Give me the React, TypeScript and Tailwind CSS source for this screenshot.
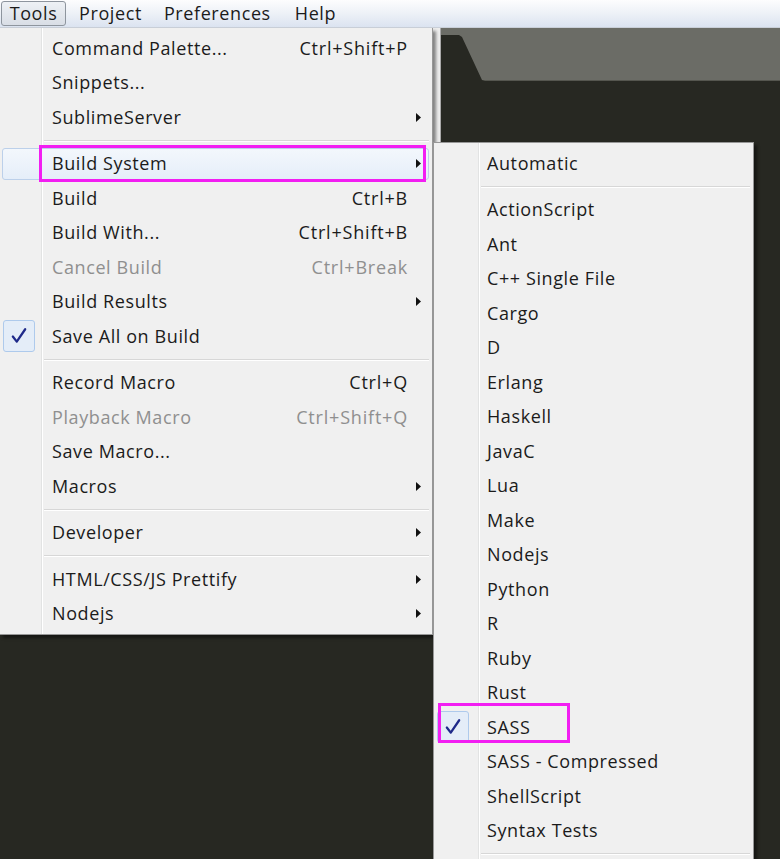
import React from "react";

type Item =
  | { sep: true }
  | {
      sep?: false;
      label: string;
      shortcut?: string;
      arrow?: boolean;
      disabled?: boolean;
      checked?: boolean;
      hover?: boolean;
    };

const toolsItems: Item[] = [
  { label: "Command Palette...", shortcut: "Ctrl+Shift+P" },
  { label: "Snippets..." },
  { label: "SublimeServer", arrow: true },
  { sep: true },
  { label: "Build System", arrow: true, hover: true },
  { label: "Build", shortcut: "Ctrl+B" },
  { label: "Build With...", shortcut: "Ctrl+Shift+B" },
  { label: "Cancel Build", shortcut: "Ctrl+Break", disabled: true },
  { label: "Build Results", arrow: true },
  { label: "Save All on Build", checked: true },
  { sep: true },
  { label: "Record Macro", shortcut: "Ctrl+Q" },
  { label: "Playback Macro", shortcut: "Ctrl+Shift+Q", disabled: true },
  { label: "Save Macro..." },
  { label: "Macros", arrow: true },
  { sep: true },
  { label: "Developer", arrow: true },
  { sep: true },
  { label: "HTML/CSS/JS Prettify", arrow: true },
  { label: "Nodejs", arrow: true },
];

const buildItems: Item[] = [
  { label: "Automatic" },
  { sep: true },
  ...[
    "ActionScript",
    "Ant",
    "C++ Single File",
    "Cargo",
    "D",
    "Erlang",
    "Haskell",
    "JavaC",
    "Lua",
    "Make",
    "Nodejs",
    "Python",
    "R",
    "Ruby",
    "Rust",
  ].map((label) => ({ label })),
  { label: "SASS", checked: true },
  { label: "SASS - Compressed" },
  { label: "ShellScript" },
  { label: "Syntax Tests" },
  { sep: true },
];

function Check() {
  return (
    <svg width="18" height="18" viewBox="0 0 16 16">
      <path
        d="M2.5 8.5 L6 13 L13.5 2"
        fill="none"
        stroke="#1f2a8a"
        strokeWidth="2"
        strokeLinecap="round"
        strokeLinejoin="round"
      />
    </svg>
  );
}

function Arrow() {
  return (
    <svg width="5" height="9" viewBox="0 0 5 9">
      <path d="M0 0 L5 4.5 L0 9 Z" fill="#111" />
    </svg>
  );
}

function MenuRow({ item, gutter, pad }: { item: Item; gutter: number; pad: number }) {
  if (item.sep) {
    return (
      <div className="h-[12px] flex items-center" style={{ paddingLeft: gutter + 2 }}>
        <div className="w-full mr-[3px] border-t border-[#d7d7d7] border-b border-b-white" />
      </div>
    );
  }
  const color = item.disabled ? "text-[#8f8f8f]" : "text-[#1b1b1b]";
  return (
    <div className="relative h-[34.5px] flex items-center">
      {item.hover && (
        <div className="absolute left-[2px] right-[3px] top-[1px] bottom-[1px] rounded-[3px] border border-[#bcd0ea] bg-gradient-to-b from-[#f3f7fc] to-[#e5eef9]" />
      )}
      {item.checked && (
        <div className="absolute left-[3px] top-[1px] w-[32px] h-[32px] rounded-[3px] border border-[#aecaec] bg-[#e4edf8] flex items-center justify-center">
          <Check />
        </div>
      )}
      <div
        className={`relative flex-1 whitespace-nowrap tracking-[0.6px] ${color}`}
        style={{ paddingLeft: gutter + pad }}
      >
        {item.label}
      </div>
      {item.shortcut && (
        <div className={`relative whitespace-nowrap tracking-[0.8px] ${color}`}>
          {item.shortcut}
        </div>
      )}
      <div className="relative w-[24px] h-full flex items-center pl-[8px]">
        {item.arrow && <Arrow />}
      </div>
    </div>
  );
}

function Menu({ items, gutter, pad }: { items: Item[]; gutter: number; pad: number }) {
  return (
    <div className="relative py-[3px]">
      <div
        className="absolute top-0 bottom-0 border-l border-[#e2e3e3] border-r border-r-white"
        style={{ left: gutter - 1, width: 2 }}
      />
      {items.map((item, i) => (
        <MenuRow key={i} item={item} gutter={gutter} pad={pad} />
      ))}
    </div>
  );
}

export default function App() {
  return (
    <div
      className="relative w-[780px] h-[859px] overflow-hidden bg-[#272822] text-[18px] leading-normal"
      style={{ fontFamily: '"Open Sans", "Noto Sans", sans-serif' }}
    >
      {/* menu bar */}
      <div className="h-[28px] flex items-stretch bg-gradient-to-b from-[#fdfdfe] via-[#edf1f7] to-[#dbe3f0] border-b border-[#c9cfd8] text-[#1b1b1b] tracking-[0.6px]">
        <div className="mt-[1px] mb-[1px] ml-[1px] w-[65px] flex items-center justify-center rounded-[3px] border border-[#8e959e] bg-gradient-to-b from-[#eef1f5] to-[#d9dee6]">
          Tools
        </div>
        <div className="flex items-center pl-[13px]">Project</div>
        <div className="flex items-center pl-[22px]">Preferences</div>
        <div className="flex items-center pl-[24px]">Help</div>
      </div>

      {/* editor tab strip */}
      <div className="flex">
        <div className="w-[433px] shrink-0" />
        <div className="w-[8px] h-[115px] bg-[#ededed] border-r border-[#a9a9a9]" />
        <div className="flex-1 h-[53px] bg-[#6b6c66] border-b border-[#55564f]">
          <svg width="44" height="53" viewBox="0 0 44 53" className="block">
            <path d="M0 7 L18 7 L21 9 L41 52 L44 53 L0 53 Z" fill="#272822" />
          </svg>
        </div>
      </div>

      {/* Tools dropdown */}
      <div className="absolute left-0 top-[28px] w-[433px] bg-[#f0f0f0] border-r border-b border-[#979797] shadow-[3px_3px_3px_rgba(0,0,0,0.45)]">
        <Menu items={toolsItems} gutter={42} pad={10} />
        <div className="absolute left-[39px] top-[117px] w-[387px] h-[37px] border-[3px] border-[#f21ef2]" />
      </div>

      {/* Build System submenu */}
      <div className="absolute left-[433px] top-[142px] w-[321px] h-[760px] bg-[#f0f0f0] border border-[#979797] shadow-[3px_3px_3px_rgba(0,0,0,0.45)]">
        <Menu items={buildItems} gutter={45} pad={8} />
        <div className="absolute left-[4px] top-[560px] w-[132px] h-[40px] border-[3px] border-[#f21ef2]" />
      </div>
    </div>
  );
}
